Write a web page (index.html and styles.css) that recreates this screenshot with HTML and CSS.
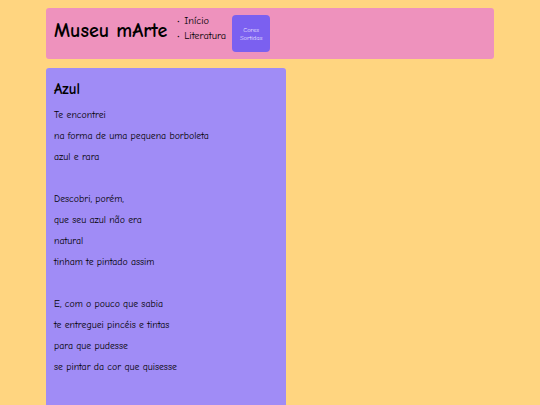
FILE: index.html
```html
<!DOCTYPE html>
<html lang="pt">
<head>
<meta charset="utf-8">
<title>Museu mArte - Azul</title>
<link rel="stylesheet" href="styles.css">
</head>
<body>
<div class="page">
  <header class="header">
    <h1 class="logo">Museu mArte</h1>
    <ul class="nav">
      <li>Início</li>
      <li>Literatura</li>
    </ul>
    <a class="btn">Cores Sortidas</a>
  </header>
  <main class="card">
    <h2 class="title">Azul</h2>
    <div class="poem">
      <p>Te encontrei</p>
      <p>na forma de uma pequena borboleta</p>
      <p>azul e rara</p>
      <p class="gap">&nbsp;</p>
      <p>Descobri, porém,</p>
      <p>que seu azul não era</p>
      <p>natural</p>
      <p>tinham te pintado assim</p>
      <p class="gap">&nbsp;</p>
      <p>E, com o pouco que sabia</p>
      <p>te entreguei pincéis e tintas</p>
      <p>para que pudesse</p>
      <p>se pintar da cor que quisesse</p>
      <p class="gap">&nbsp;</p>
      <p>&lt;- Voltar</p>
    </div>
  </main>
</div>
</body>
</html>
```
FILE: styles.css
```css
html, body {
  margin: 0;
  padding: 0;
}
body {
  background: #FFD580;
  font-family: "Comic Sans MS", "Comic Neue", "DejaVu Sans", sans-serif;
  color: #000;
}
.page {
  width: 448px;
  margin: 8px auto 0;
}
.header {
  display: flex;
  align-items: center;
  height: 51px;
  padding: 0 8px;
  background: #EE92BD;
  border-radius: 3px;
  box-sizing: border-box;
}
.logo {
  margin: 0 0 5px;
  font-size: 20px;
  line-height: 24px;
  font-weight: bold;
}
.nav {
  align-self: flex-start;
  margin: 6px 0 0 9px;
  padding: 0 0 0 8px;
  font-size: 10.3px;
  line-height: 14px;
  list-style: none;
}
.nav li::before {
  content: "•";
  display: inline-block;
  width: 7px;
  margin-left: -7px;
  font-size: 7px;
}
.btn {
  display: flex;
  align-items: center;
  justify-content: center;
  text-align: center;
  width: 38px;
  height: 37px;
  margin-left: 6px;
  background: #7B60F0;
  color: #E8E0FF;
  font-size: 6.5px;
  line-height: 8px;
  border-radius: 4px;
  padding: 0 4px;
  box-sizing: border-box;
}
.card {
  width: 240px;
  margin-top: 9px;
  background: #A08CF6;
  border-radius: 3px;
  padding: 11px 8px 8px;
  box-sizing: border-box;
}
.title {
  margin: 0 0 5px;
  font-size: 15px;
  line-height: 20px;
  font-weight: bold;
}
.poem p {
  margin: 0;
  font-size: 9.8px;
  line-height: 21px;
}
```
